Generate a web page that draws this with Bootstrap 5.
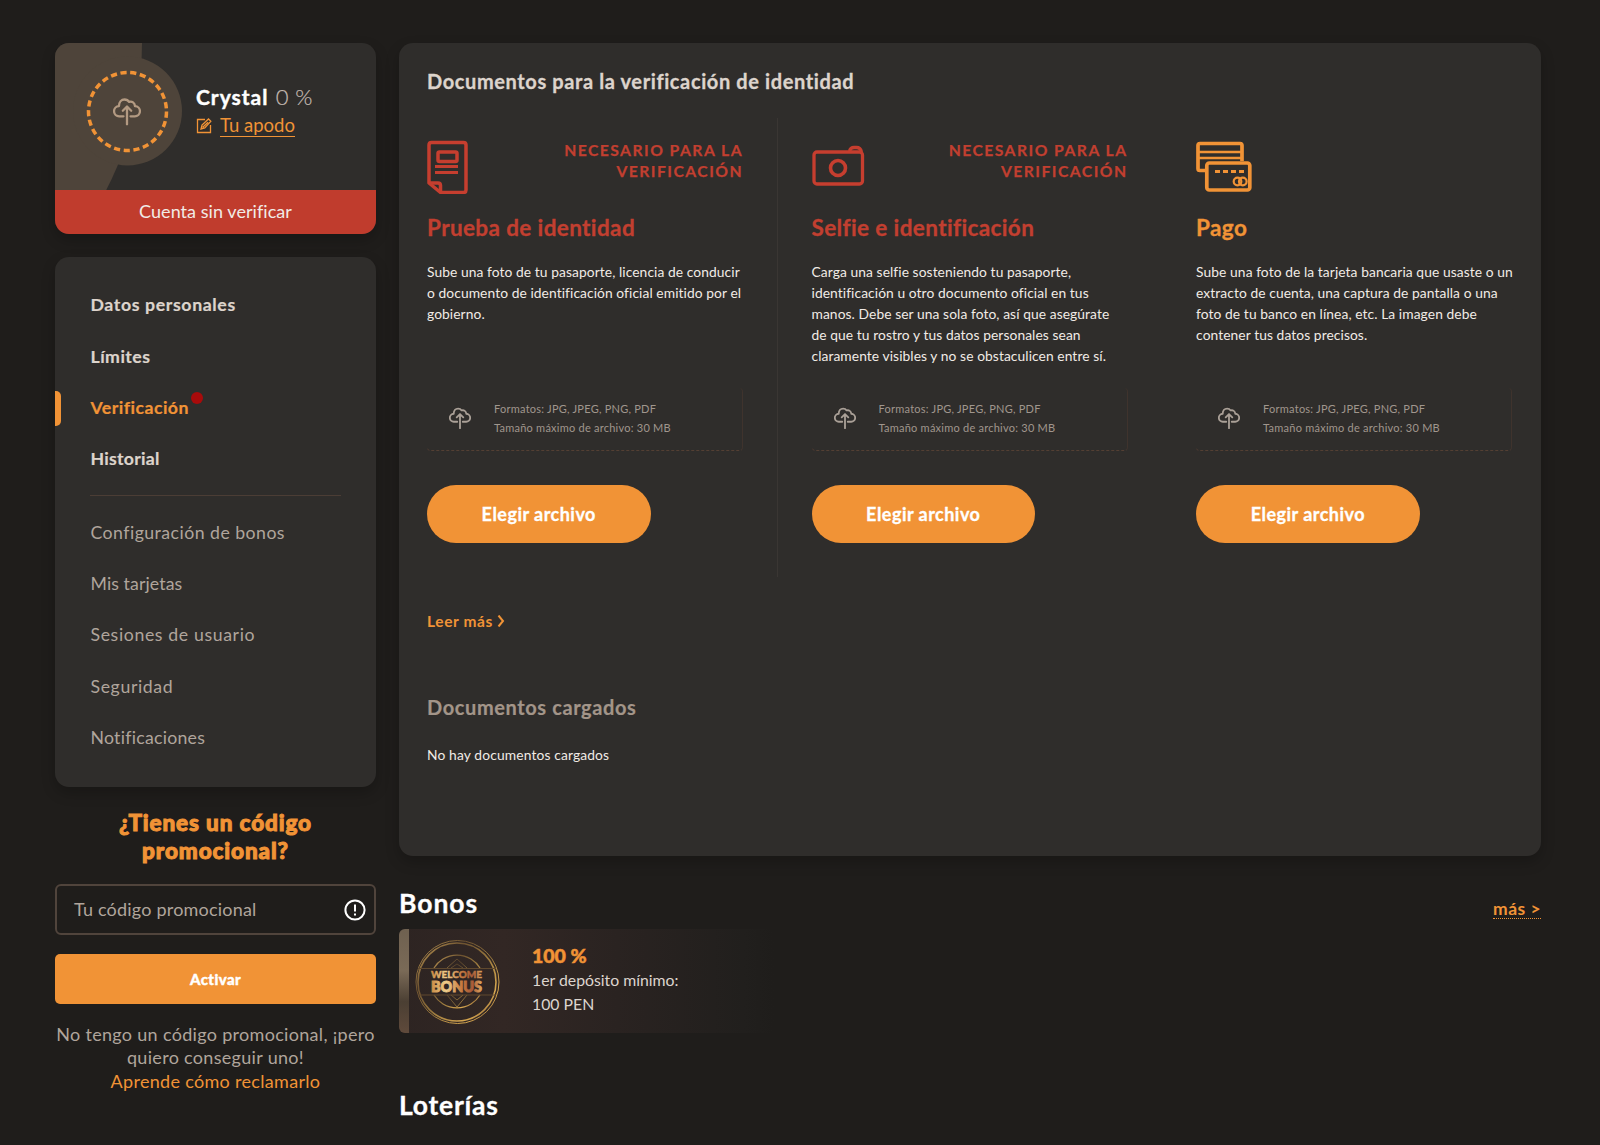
<!DOCTYPE html>
<html lang="es">
<head>
<meta charset="utf-8">
<meta name="viewport" content="width=device-width, initial-scale=1">
<title>Verificación</title>
<link href="https://cdn.jsdelivr.net/npm/bootstrap@5.3.0/dist/css/bootstrap.min.css" rel="stylesheet">
<style>
:root{--page:#1f1d1b;--panel:#2f2d2b;--orange:#f19336;--red:#c03c2d;--cream:#ddd4cc;--muted:#b0a59c;--brown:#4e443a}
body{background:var(--page);color:#f1ebe6;font-family:Lato,"Open Sans",sans-serif;font-variant-ligatures:none;min-height:1145px;overflow:hidden}
a{text-decoration:none}
.page-wrap{padding:43px 59px 0 55px;gap:23px}
.side-col{width:321px;flex:none}
.main-col{width:1142px;flex:none}
.panel{background:var(--panel);border-radius:14px;box-shadow:0 6px 14px rgba(0,0,0,.22)}
.t-orange{color:var(--orange)}
.t-red{color:#c23f30}
.profile-card{height:191px}
.profile-top{height:147px}
.profile-art{width:141px;height:147px;flex:none}
.profile-info{padding-top:40px}
.user-line{font-size:21px;line-height:28px;margin-bottom:4px;letter-spacing:1px}
.user-line b{-webkit-text-stroke:.4px #fff}
.user-pct{font-weight:300;color:#c4bab1;font-size:22px;letter-spacing:.3px;margin-left:1px;-webkit-text-stroke:.2px #c4bab1}
.nick{font-size:18.5px;line-height:21px;border-bottom:1px solid var(--orange);color:var(--orange)}
.status-bar{background:var(--red);height:44px;line-height:43px;font-size:18px;letter-spacing:.05px}
.menu-card{margin-top:23px;height:530px;padding:23px 35px}
.menu-link{display:flex;align-items:center;height:51.2px;font-size:17.7px;color:var(--muted);letter-spacing:.46px;padding-left:.5px}
.menu-link.tight{letter-spacing:.1px}
.menu-link.snug{letter-spacing:.26px}
.menu-link.loose{letter-spacing:.62px}
.menu-main .menu-link{font-weight:700;color:var(--cream);-webkit-text-stroke:.2px currentColor}
.menu-main .menu-link.is-active{color:var(--orange)}
.is-active::before{content:"";position:absolute;left:-35px;top:8.500px;width:6px;height:35px;background:var(--orange);border-radius:0 5px 5px 0}
.alert-dot{position:absolute;left:101px;top:10px;width:12px;height:12px;border-radius:50%;background:#a80b0b}
.menu-rule{height:1px;background:#4b3d35;margin:10px 0 12px}
.promo-title{font-size:22.5px;line-height:28px;font-weight:900;letter-spacing:.88px;-webkit-text-stroke:1px var(--orange);margin:22px 0 19px}
.promo-field{height:51px;border:2px solid #50443c;border-radius:6px;padding:0 8px 0 17px;font-size:18px;letter-spacing:.2px;color:var(--muted)}
.promo-btn,.promo-btn:hover{height:50px;margin-top:19px;background:var(--orange);border-radius:5px;color:#fff;font-weight:900;font-size:15px;letter-spacing:.4px;-webkit-text-stroke:.4px #fff}
.promo-note{margin:19px -10px 0;font-size:18px;line-height:23.3px;letter-spacing:.31px;color:var(--muted)}
.doc-panel{height:813px;padding:26px 28px}
.panel-title{font-size:20px;line-height:24px;font-weight:700;letter-spacing:.61px;color:var(--cream);-webkit-text-stroke:.3px currentColor}
.doc-grid{margin-top:25px}
.doc-col{width:384.6px;height:459px;flex:none;padding-top:22px}
.doc-col:last-child{width:317px}
.doc-col:first-child{width:350.5px;margin-right:34px;border-right:1px solid #3a3633}
.doc-head{height:54px;width:316px}
.need-tag{font-size:15.7px;line-height:21px;font-weight:700;letter-spacing:1.47px;margin-right:0;text-align:right;color:#c23f30;-webkit-text-stroke:.25px currentColor}
.doc-title{font-size:22.5px;line-height:28px;font-weight:700;letter-spacing:.38px;-webkit-text-stroke:.3px currentColor;margin:20px 0 18.500px}
.doc-text{font-size:13.8px;line-height:21px;height:105.500px;letter-spacing:.08px;white-space:nowrap;margin:0}
.drop-zone{margin-top:22px;width:316px;height:62.500px;border-bottom:1px dashed #543f33;border-right:1px solid #3f332d;border-radius:4px;padding:0 0 1px 22px;gap:23px;font-size:11px;line-height:19px;letter-spacing:.24px;color:#a0968d}
.choose-btn,.choose-btn:hover{margin-top:34.500px;width:223.500px;height:58px;border-radius:29px;background:var(--orange);color:#fff;font-weight:700;font-size:18px;letter-spacing:.47px;-webkit-text-stroke:.3px #fff;padding:0}
.read-more{margin-top:34px;font-size:15.5px;line-height:20px;font-weight:700;letter-spacing:.6px;gap:4px}
.loaded-title{margin:64px 0 26px;font-size:20px;line-height:24px;font-weight:700;letter-spacing:.6px;color:#a39589;-webkit-text-stroke:.2px currentColor}
.loaded-text{font-size:13.8px;line-height:20px;letter-spacing:.14px;margin:0}
.bonus-head{margin-top:31px}
.section-title{font-size:26.5px;line-height:32px;font-weight:700;letter-spacing:.95px;color:#fff;margin:0;-webkit-text-stroke:.3px #fff}
.lottery-title{margin-top:56px;letter-spacing:.75px}
.more-link{font-size:17.5px;line-height:19px;font-weight:700;letter-spacing:.47px;border-bottom:1px dotted var(--orange)}
.bonus-card{margin-top:10px;width:375px;height:104px;border-radius:6px;overflow:hidden;background:linear-gradient(90deg,#2d2422 0,#322724 28%,#2a2321 58%,#211f1d 92%,#1f1d1b 100%)}
.bonus-copy{padding:0 0 4px 20px;line-height:23.4px;font-size:15.8px;color:#ddd5ce}
.bonus-pct{font-size:19.5px;font-weight:900;line-height:25px;color:var(--orange);-webkit-text-stroke:.5px var(--orange)}
</style>
</head>
<body>
<svg width="0" height="0" class="position-absolute">
  <symbol id="cloud-up" viewBox="0 0 28 28">
    <g fill="none" stroke="currentColor" stroke-width="2.300" stroke-linecap="round" stroke-linejoin="round">
      <path d="M10.500 18.800H6.300a5.100 5.100 0 0 1-.3-10.200C6 4.500 8.500 2 11.500 2c2 0 3.600.8 4.600 2.400C19 3.500 21.800 5.300 22 8.600a5.100 5.100 0 0 1-.3 10.200H17.500"/>
      <path d="M14 27V9.500M9.800 13.200 14 9l4.200 4.200"/>
    </g>
  </symbol>
</svg>
<div class="page-wrap d-flex">
  <aside class="side-col">
    <section class="panel profile-card overflow-hidden">
      <div class="profile-top d-flex">
        <svg class="profile-art" viewBox="0 0 141 147">
          <g fill="#4e443a"><circle cx="-233" cy="0" r="320"/><circle cx="72.500" cy="68" r="54.500"/></g>
          <circle cx="72.500" cy="68.500" r="39" fill="none" stroke="#f19336" stroke-width="3.500" stroke-dasharray="6.200 3.600"/>
          <svg x="58" y="54.500" width="28" height="28" color="#b39a82"><use href="#cloud-up"/></svg>
        </svg>
        <div class="profile-info">
          <div class="user-line"><b class="text-white">Crystal</b> <span class="user-pct">0 %</span></div>
          <div class="d-flex align-items-center">
            <svg class="me-2" width="16" height="16" viewBox="0 0 16 16" fill="none" stroke="#f19336" stroke-width="1.300"><path d="M9 1.500H1.500v13h13V7"/><path d="M5 11l1-4 6.500-6 2.300 2.300L8.800 10zM6.500 9.500 12 4.300"/></svg>
            <a href="#" class="nick">Tu apodo</a>
          </div>
        </div>
      </div>
      <div class="status-bar text-center">Cuenta sin verificar</div>
    </section>
    <nav class="panel menu-card">
      <div class="menu-main">
        <a href="#" class="menu-link loose">Datos personales</a>
        <a href="#" class="menu-link">Límites</a>
        <a href="#" class="menu-link is-active position-relative">Verificación<i class="alert-dot"></i></a>
        <a href="#" class="menu-link snug">Historial</a>
      </div>
      <div class="menu-rule"></div>
      <a href="#" class="menu-link">Configuración de bonos</a>
      <a href="#" class="menu-link tight">Mis tarjetas</a>
      <a href="#" class="menu-link loose">Sesiones de usuario</a>
      <a href="#" class="menu-link loose">Seguridad</a>
      <a href="#" class="menu-link snug">Notificaciones</a>
    </nav>
    <section class="text-center">
      <h2 class="promo-title t-orange">¿Tienes un código<br>promocional?</h2>
      <div class="promo-field d-flex align-items-center justify-content-between">
        <span>Tu código promocional</span>
        <svg width="22" height="22" viewBox="0 0 22 22" fill="none" stroke="#fff"><circle cx="11" cy="11" r="9.600" stroke-width="2"/><path d="M11 5.500v7" stroke-width="2"/><path d="M11 14.500v2" stroke-width="2"/></svg>
      </div>
      <button class="btn promo-btn w-100">Activar</button>
      <p class="promo-note">No tengo un código promocional, ¡pero<br>quiero conseguir uno!<br><a href="#" class="t-orange">Aprende cómo reclamarlo</a></p>
    </section>
  </aside>
  <main class="main-col">
    <section class="panel doc-panel">
      <h1 class="panel-title m-0">Documentos para la verificación de identidad</h1>
      <div class="doc-grid d-flex">
        <article class="doc-col">
          <div class="doc-head d-flex justify-content-between">
            <svg width="41" height="54" viewBox="0 0 41 54" fill="none" stroke="#c63e2f" stroke-width="3.500" stroke-linejoin="round"><path d="M2 43V5q0-2.500 2.500-2.500h32Q39 2.500 39 5v45q0 2.500-2.500 2.500H13.500z"/><path d="M2 43h9q2.500 0 2.500 2.500v7"/><rect x="11" y="12" width="19" height="9.500" rx="1.500"/><path d="M8 26.500h23M8 32.500h23" stroke-width="2.800"/></svg>
            <div class="need-tag">NECESARIO PARA LA<br>VERIFICACIÓN</div>
          </div>
          <h3 class="doc-title t-red">Prueba de identidad</h3>
          <p class="doc-text">Sube una foto de tu pasaporte, licencia de conducir<br>o documento de identificación oficial emitido por el<br>gobierno.</p>
          <div class="drop-zone d-flex align-items-center">
            <svg width="22" height="22" color="#aaa097"><use href="#cloud-up"/></svg>
            <div>Formatos: JPG, JPEG, PNG, PDF<br>Tamaño máximo de archivo: 30 MB</div>
          </div>
          <button class="btn choose-btn">Elegir archivo</button>
        </article>
        <article class="doc-col">
          <div class="doc-head d-flex justify-content-between">
            <svg width="53" height="54" viewBox="0 0 53 54" fill="none" stroke="#c63e2f" stroke-width="3.300"><rect x="2" y="12" width="48.500" height="32" rx="3"/><circle cx="26" cy="28" r="7.500" stroke-width="3.600"/><path d="M37.500 11q1-3.500 4.500-3.500h2.500q4 0 5 4.500"/></svg>
            <div class="need-tag">NECESARIO PARA LA<br>VERIFICACIÓN</div>
          </div>
          <h3 class="doc-title t-red">Selfie e identificación</h3>
          <p class="doc-text">Carga una selfie sosteniendo tu pasaporte,<br>identificación u otro documento oficial en tus<br>manos. Debe ser una sola foto, así que asegúrate<br>de que tu rostro y tus datos personales sean<br>claramente visibles y no se obstaculicen entre sí.</p>
          <div class="drop-zone d-flex align-items-center">
            <svg width="22" height="22" color="#aaa097"><use href="#cloud-up"/></svg>
            <div>Formatos: JPG, JPEG, PNG, PDF<br>Tamaño máximo de archivo: 30 MB</div>
          </div>
          <button class="btn choose-btn">Elegir archivo</button>
        </article>
        <article class="doc-col">
          <div class="doc-head d-flex">
            <svg width="56" height="54" viewBox="0 0 56 54" fill="none" stroke="#f19336" stroke-width="3.700" stroke-linejoin="round"><path d="M10 30.500H4q-2 0-2-2v-23q0-2 2-2h40q2 0 2 2V21"/><path d="M3 12h42M3 18h42" stroke-width="2.300"/><rect x="10.800" y="23" width="43" height="27" rx="2.500"/><path d="M19 31.500h30" stroke-width="3" stroke-dasharray="5 3"/><circle cx="41.500" cy="41.500" r="3.800" stroke-width="2.200"/><circle cx="46.800" cy="41.500" r="3.800" stroke-width="2.200"/></svg>
          </div>
          <h3 class="doc-title t-orange">Pago</h3>
          <p class="doc-text">Sube una foto de la tarjeta bancaria que usaste o un<br>extracto de cuenta, una captura de pantalla o una<br>foto de tu banco en línea, etc. La imagen debe<br>contener tus datos precisos.</p>
          <div class="drop-zone d-flex align-items-center">
            <svg width="22" height="22" color="#aaa097"><use href="#cloud-up"/></svg>
            <div>Formatos: JPG, JPEG, PNG, PDF<br>Tamaño máximo de archivo: 30 MB</div>
          </div>
          <button class="btn choose-btn">Elegir archivo</button>
        </article>
      </div>
      <a href="#" class="read-more t-orange d-flex align-items-center">Leer más<svg width="8" height="12" viewBox="0 0 8 12" fill="none" stroke="#f19336" stroke-width="2"><path d="M1.500 .5 6 6 1.500 11.500"/></svg></a>
      <h2 class="loaded-title">Documentos cargados</h2>
      <p class="loaded-text">No hay documentos cargados</p>
    </section>
    <div class="bonus-head d-flex justify-content-between align-items-end">
      <h2 class="section-title">Bonos</h2>
      <a href="#" class="more-link t-orange">más &gt;</a>
    </div>
    <div class="bonus-card d-flex align-items-center">
      <svg width="113" height="104" viewBox="0 0 113 104" class="flex-shrink-0">
        <defs>
          <linearGradient id="gold" x1="0" y1="0" x2="1" y2="1"><stop offset="0" stop-color="#c09a55"/><stop offset=".3" stop-color="#6e5330"/><stop offset=".55" stop-color="#9b7a3e"/><stop offset=".8" stop-color="#d8a850"/><stop offset="1" stop-color="#6e4a2a"/></linearGradient>
          <linearGradient id="strip" x1="0" y1="0" x2="0" y2="1"><stop offset="0" stop-color="#6f6150"/><stop offset=".4" stop-color="#7a6a57"/><stop offset=".7" stop-color="#4b3f33"/><stop offset="1" stop-color="#5f4a3b"/></linearGradient>
          <linearGradient id="word" x1="0" y1="0" x2="1" y2="0"><stop offset="0" stop-color="#c98b45"/><stop offset=".3" stop-color="#f0cf8c"/><stop offset=".6" stop-color="#c7793f"/><stop offset=".8" stop-color="#a65a38"/><stop offset="1" stop-color="#e0a860"/></linearGradient>
        </defs>
        <rect width="10" height="104" fill="url(#strip)"/>
        <g fill="none" stroke="url(#gold)">
          <circle cx="58.500" cy="53" r="41.500" stroke-width="1"/><circle cx="58" cy="53" r="39" stroke-width="1.600"/>
          <path d="M35 39a27 27 0 0 1 46 0M35 66a27 27 0 0 0 46 0" stroke-width="1.300"/>
          <path d="M48 39 58 30l10 9M52 39l6-4 6 4M48 66l10 12 10-12M52 66l6 5 6-5" stroke-width=".6"/>
        </g>
        <path d="M19 39.500h78M19 66h78" stroke="#60492e"/>
        <g font-family="Lato, sans-serif" font-weight="900" fill="url(#word)" text-anchor="middle">
          <text x="57.500" y="49" font-size="9.500" textLength="51" lengthAdjust="spacingAndGlyphs" stroke="url(#word)" stroke-width=".4">WELCOME</text>
          <text x="57.500" y="63" font-size="15" textLength="51" lengthAdjust="spacingAndGlyphs" stroke="url(#word)" stroke-width="1">BONUS</text>
        </g>
      </svg>
      <div class="bonus-copy">
        <div class="bonus-pct">100 %</div>
        <div>1er depósito mínimo:</div>
        <div>100 PEN</div>
      </div>
    </div>
    <h2 class="section-title lottery-title">Loterías</h2>
  </main>
</div>
<script src="https://cdn.jsdelivr.net/npm/bootstrap@5.3.0/dist/js/bootstrap.bundle.min.js"></script>
</body>
</html>
